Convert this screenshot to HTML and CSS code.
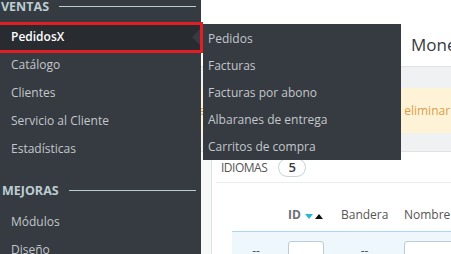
FILE: index.html
```html
<!DOCTYPE html>
<html lang="es">
<head>
<meta charset="utf-8">
<link rel="stylesheet" href="styles.css">
</head>
<body>
<div class="page">
  <aside class="sidebar">
    <div class="sidebar-inner">
      <div class="section-title"><span>VENTAS</span><i class="rule"></i></div>
      <div class="nav-item active">PedidosX</div>
      <div class="nav-item">Catálogo</div>
      <div class="nav-item">Clientes</div>
      <div class="nav-item">Servicio al Cliente</div>
      <div class="nav-item">Estadísticas</div>
      <div class="section-title mejoras"><span>MEJORAS</span><i class="rule"></i></div>
      <div class="nav-item">Módulos</div>
      <div class="nav-item">Diseño</div>
    </div>
  </aside>
  <main class="content">
    <div class="topbar"><h1 class="page-title">Monedas</h1></div>
    <div class="alert-zone">
      <div class="alert">No puede eliminar el idioma predeterminado - eliminar</div>
    </div>
    <div class="panel-wrap">
      <div class="panel">
        <div class="panel-heading">IDIOMAS <span class="badge">5</span></div>
        <table class="grid">
          <thead>
            <tr>
              <th class="c1"></th>
              <th class="c2"><b>ID</b> <span class="sort"><i class="down"></i><i class="up"></i></span></th>
              <th class="c3">Bandera</th>
              <th class="c4">Nombre</th>
            </tr>
          </thead>
          <tbody>
            <tr class="filter">
              <td class="c1 center">--</td>
              <td class="c2"><span class="input small"></span></td>
              <td class="c3 center">--</td>
              <td class="c4"><span class="input wide"></span></td>
            </tr>
          </tbody>
        </table>
      </div>
    </div>
  </main>
  <div class="highlight"></div>
  <div class="flyout">
    <div class="flyout-arrow"></div>
    <div class="fly-item">Pedidos</div>
    <div class="fly-item">Facturas</div>
    <div class="fly-item">Facturas por abono</div>
    <div class="fly-item">Albaranes de entrega</div>
    <div class="fly-item">Carritos de compra</div>
  </div>
</div>
</body>
</html>
```
FILE: styles.css
```css
* { box-sizing: border-box; }
html, body { margin: 0; padding: 0; }
body {
  width: 451px;
  height: 254px;
  overflow: hidden;
  font-family: "Open Sans", "DejaVu Sans", sans-serif;
  font-size: 12px;
  background: #fff;
}
.page {
  position: relative;
  display: flex;
  width: 451px;
  height: 254px;
  overflow: hidden;
}
.sidebar {
  width: 201px;
  flex: none;
  background: #363a41;
  overflow: hidden;
}
.sidebar-inner { margin-top: -11px; }
.section-title {
  display: flex;
  align-items: center;
  height: 34px;
  padding-left: 1px;
  padding-right: 5px;
  color: #bbcdd2;
  font-weight: 700;
  font-size: 12.5px;
}
.section-title .rule {
  flex: 1;
  height: 1px;
  background: #bbcdd2;
  margin-left: 10px;
}
.section-title.mejoras { height: 45px; padding-top: 9px; padding-left: 2px; }
.nav-item {
  height: 28px;
  line-height: 28px;
  padding-left: 11px;
  color: #c3c8cc;
  font-size: 12px;
  white-space: nowrap;
}
.nav-item.active {
  background: #282b30;
  color: #fff;
  font-weight: 600;
}
.content {
  flex: 1;
  background: #eff1f2;
  display: flex;
  flex-direction: column;
  min-width: 0;
  overflow: hidden;
}
.topbar {
  flex: none;
  height: 67px;
  background: #fff;
  border-bottom: 1px solid #dfe3e6;
  padding-left: 210px;
  padding-top: 33px;
}
.page-title {
  margin: 0;
  font-weight: 400;
  font-size: 17px;
  line-height: 24px;
  color: #363a41;
  white-space: nowrap;
}
.alert-zone {
  flex: none;
  height: 85px;
  padding-top: 21px;
  border-bottom: 1px solid #dfe3e6;
}
.alert {
  height: 45px;
  line-height: 45px;
  background: #fff3d7;
  color: #d5a14a;
  font-size: 12px;
  white-space: nowrap;
  overflow: hidden;
  text-indent: -60px;
}
.panel-wrap {
  flex: none;
  height: 102px;
  padding-left: 10px;
  background: #f7f8f8;
}
.panel {
  height: 100%;
  background: #fff;
  border-left: 1px solid #dde2e4;
  padding-left: 4px;
  overflow: hidden;
}
.panel-heading {
  height: 31px;
  display: flex;
  align-items: center;
  padding-left: 5px;
  border-bottom: 1px solid #eaedee;
  color: #555;
  font-size: 12px;
  letter-spacing: -0.5px;
}
.badge {
  display: inline-flex;
  align-items: center;
  justify-content: center;
  width: 28px;
  height: 19px;
  margin-left: 11px;
  border: 1px solid #c9d2d6;
  border-radius: 10px;
  color: #363a41;
  font-weight: 600;
  font-size: 13px;
  letter-spacing: 0;
}
.grid {
  border-collapse: collapse;
  table-layout: fixed;
  width: 260px;
  margin-left: 16px;
}
.grid th {
  height: 48px;
  padding: 16px 0 0 8px;
  text-align: left;
  font-weight: 400;
  color: #555;
  font-size: 12px;
  white-space: nowrap;
}
.grid th b { font-weight: 700; color: #6c6f73; }
.c1 { width: 48px; }
.c2 { width: 53px; }
.c3 { width: 63px; }
.c4 { width: 96px; }
.sort { display: inline-flex; gap: 2px; vertical-align: middle; margin-left: 1px; }
.sort i { width: 0; height: 0; border-left: 4px solid transparent; border-right: 4px solid transparent; }
.sort .down { border-top: 5px solid #25b9d7; }
.sort .up { border-bottom: 5px solid #111; }
.filter td {
  background: #eef7fb;
  border-top: 1px solid #a9d8e8;
  height: 30px;
  vertical-align: top;
  padding: 9px 0 0 8px;
  color: #555;
}
.filter td.center { text-align: center; padding-left: 0; padding-top: 10px; }
.input {
  display: block;
  height: 24px;
  background: #fff;
  border: 1px solid #bbcdd2;
  border-radius: 3px;
}
.input.small { width: 36px; }
.input.wide { width: 60px; }
.highlight {
  position: absolute;
  left: -3px;
  top: 22px;
  width: 206px;
  height: 31px;
  border: 3px solid #e21e25;
  pointer-events: none;
}
.flyout {
  position: absolute;
  left: 203px;
  top: 24px;
  width: 198px;
  height: 136px;
  background: #363a41;
  padding-top: 1px;
}
.flyout-arrow {
  position: absolute;
  left: -11px;
  top: 5px;
  width: 0;
  height: 0;
  border-top: 8px solid transparent;
  border-bottom: 8px solid transparent;
  border-right: 8px solid #363a41;
}
.fly-item {
  height: 27px;
  line-height: 27px;
  padding-left: 5px;
  color: #c3c8cc;
  font-size: 12px;
  white-space: nowrap;
}
```
